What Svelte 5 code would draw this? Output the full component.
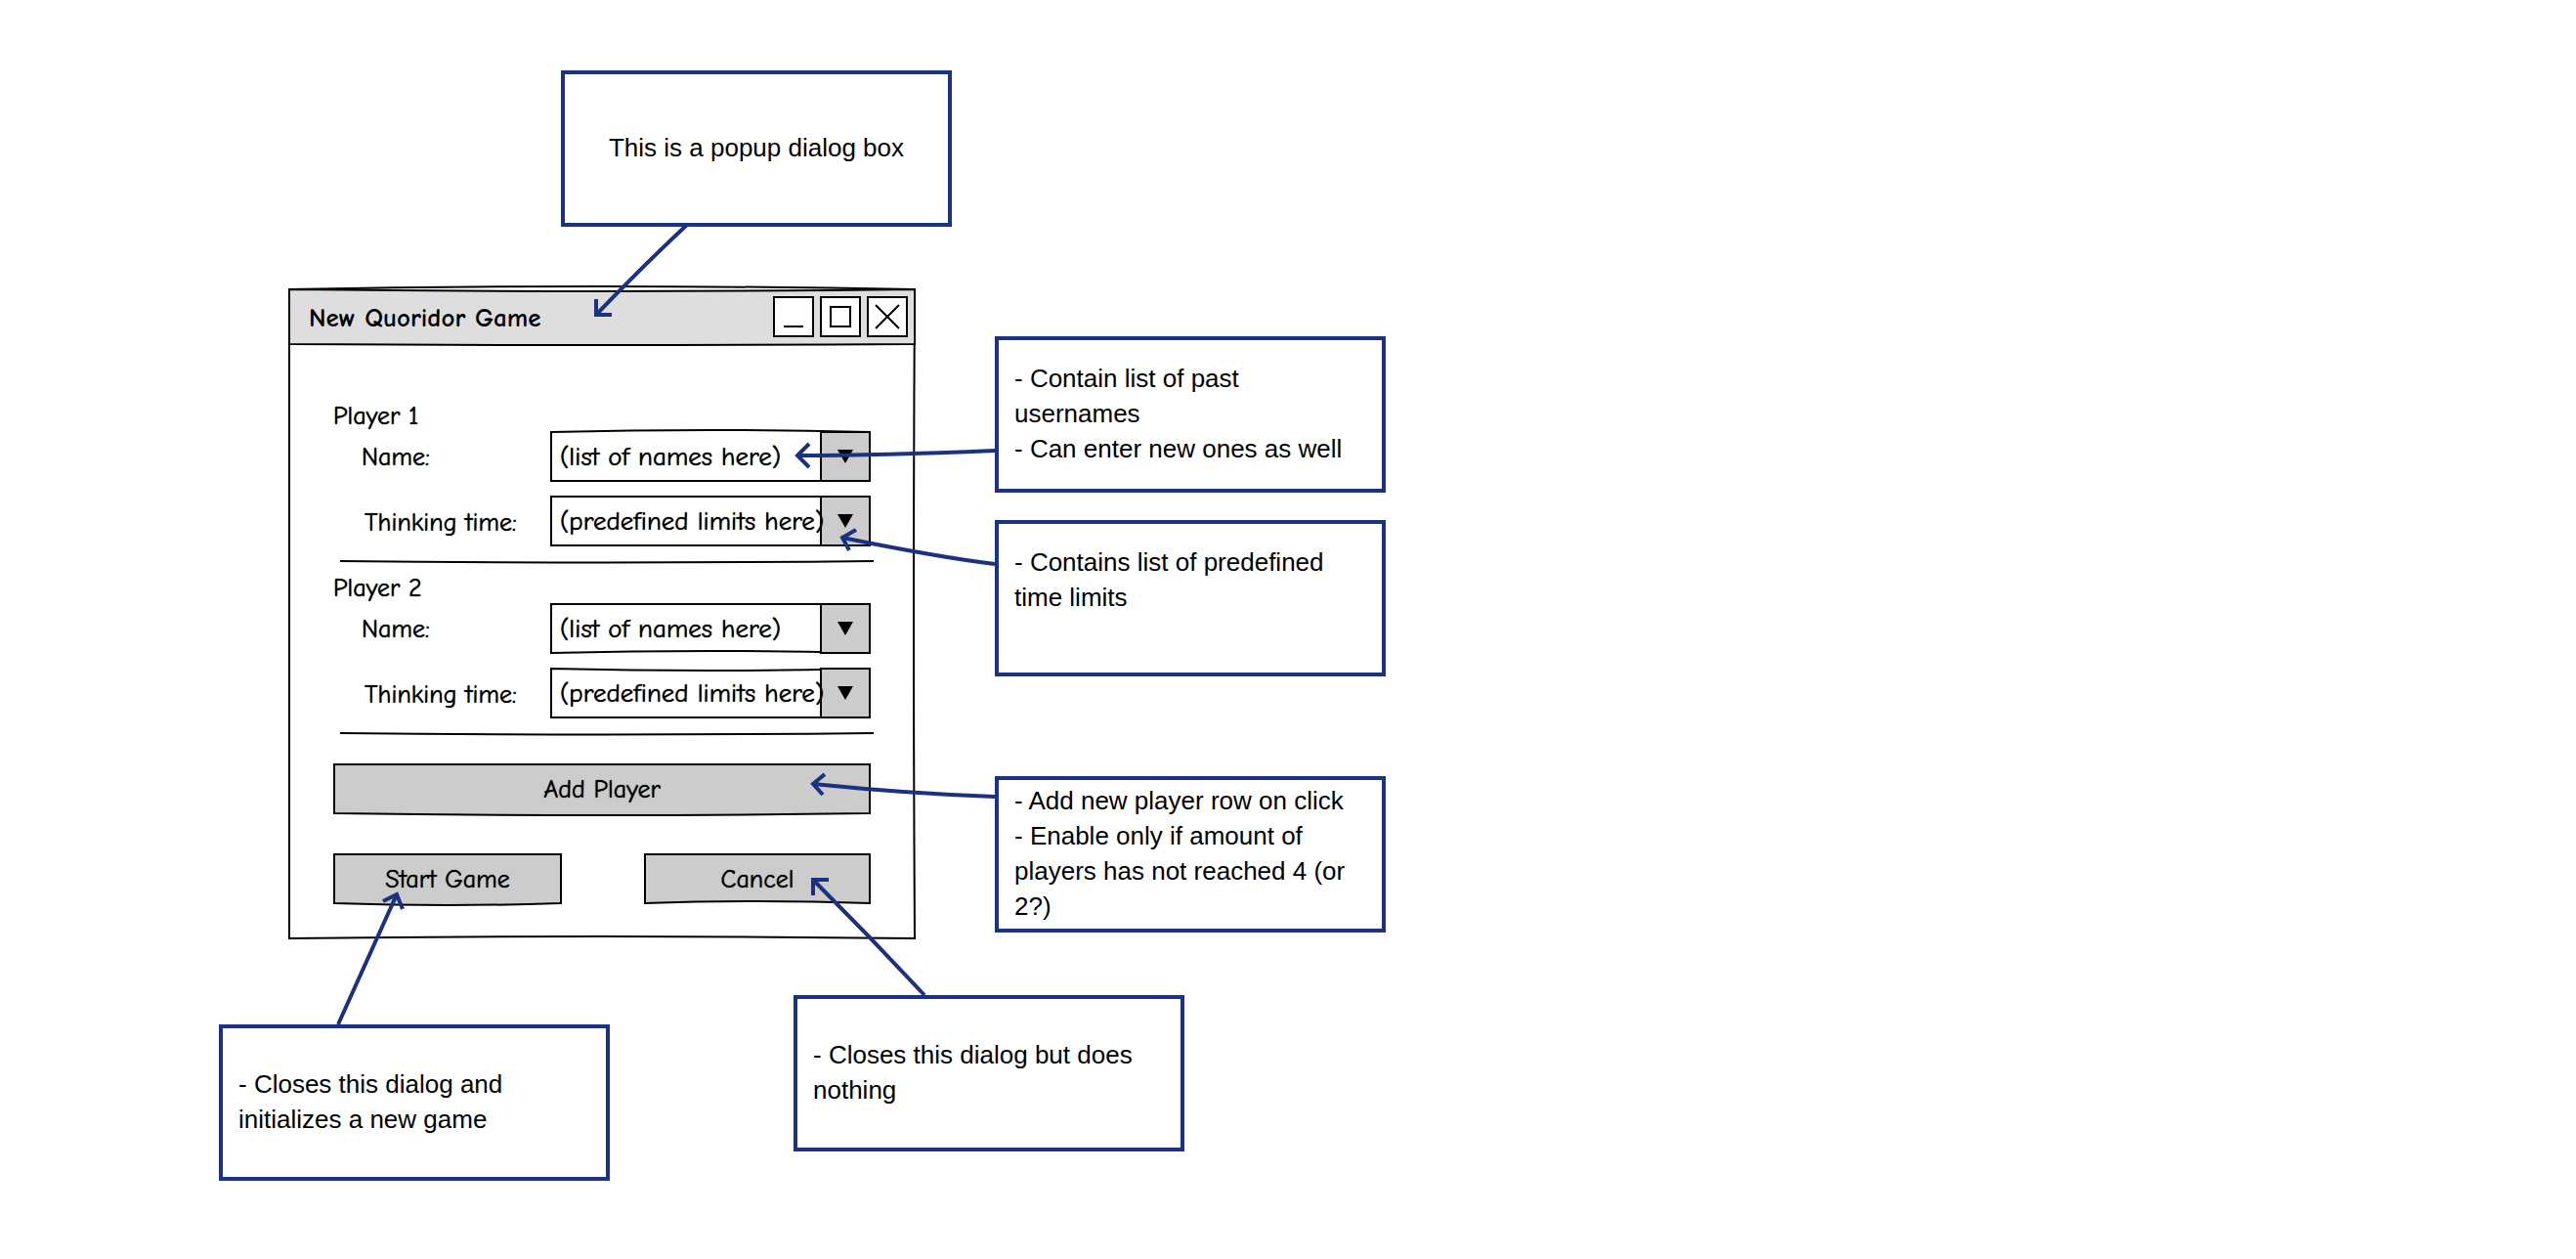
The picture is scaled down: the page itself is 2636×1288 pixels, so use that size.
<script>
  // top / bottom / right: how far each hand-drawn edge bows, in pixels
  let players = $state([
    { name: { top: -2, bottom: 0 }, time: { top: 0, bottom: 0 } },
    { name: { top: 0, bottom: -2 }, time: { top: 2, bottom: 0 } }
  ]);

  const notes = [
    { id: 'popup', lines: ['This is a popup dialog box'] },
    { id: 'names', lines: ['- Contain list of past usernames', '- Can enter new ones as well'] },
    { id: 'limits', lines: ['- Contains list of predefined time limits', ''] },
    { id: 'add', lines: ['- Add new player row on click', '- Enable only if amount of players has not reached 4 (or 2?)'] },
    { id: 'start', lines: ['- Closes this dialog and initializes a new game'] },
    { id: 'cancel', lines: ['- Closes this dialog but does nothing'] }
  ];

  const arrows = [
    'M703 230Q658 272 610 322M610 306V322H626',
    'M1018 461Q900 466 816 466M828 454L816 466L828 478',
    'M1018 577Q960 570 862 550M876 542L862 550L869 563',
    'M1018 815Q930 812 832 802M844 792L832 802L842 813',
    'M346 1048L406 915M392 922L406 915L412 930',
    'M946 1018Q890 958 832 900M832 916V900H848'
  ];

  function addPlayer() {
    if (players.length < 4) {
      players.push({ name: { top: 0, bottom: 0 }, time: { top: 0, bottom: 0 } });
    }
  }
</script>

{#snippet sketch(w, h, top = 0, bottom = 0, right = 0)}
  <svg class="sketch" viewBox="0 0 {w} {h}" preserveAspectRatio="none" aria-hidden="true">
    <path
      vector-effect="non-scaling-stroke"
      d="M1 1Q{w / 2} {1 + 2 * top} {w - 1} 1Q{w - 1 + 2 * right} {h / 2} {w - 1} {h - 1}Q{w / 2} {h - 1 + 2 * bottom} 1 {h - 1}Z"
    />
  </svg>
{/snippet}

{#snippet combo(id, label, value, edge)}
  <div class="row">
    <label class={label === 'Name:' ? 'name' : 'time'} for={id}>{label}</label>
    <div class="combo">
      {@render sketch(328, 52, edge.top, edge.bottom)}
      <span class="drop">
        <svg viewBox="0 0 16 14" aria-hidden="true"><path d="M0 0H16L8 14Z" /></svg>
      </span>
      <select {id}>
        <option>{value}</option>
      </select>
    </div>
  </div>
{/snippet}

<main class="canvas">
  <div class="window" role="dialog" aria-labelledby="title">
    {@render sketch(642, 666, -3, -2, -1)}
    <header>
      {@render sketch(642, 58, 2, 1)}
      <h1 id="title">New Quoridor Game</h1>
      <button class="tool" type="button" aria-label="Minimize">
        <svg viewBox="0 0 42 42"><path d="M11 31H31" /></svg>
      </button>
      <button class="tool" type="button" aria-label="Maximize">
        <svg viewBox="0 0 42 42"><path d="M11 11H31V31H11Z" /></svg>
      </button>
      <button class="tool" type="button" aria-label="Close">
        <svg viewBox="0 0 42 42"><path d="M9 9L33 33M33 9L9 33" /></svg>
      </button>
    </header>

    <form onsubmit={(e) => e.preventDefault()}>
      {#each players as player, i}
        <fieldset>
          <legend>Player {i + 1}</legend>
          <div class="rows">
            {@render combo(`name-${i}`, 'Name:', '(list of names here)', player.name)}
            {@render combo(`time-${i}`, 'Thinking time:', '(predefined limits here)', player.time)}
          </div>
          <svg class="rule" viewBox="0 0 546 4" preserveAspectRatio="none" aria-hidden="true">
            <path vector-effect="non-scaling-stroke" d="M0 1Q273 4 546 1" />
          </svg>
        </fieldset>
      {/each}

      <button class="action" type="button" onclick={addPlayer}>
        {@render sketch(550, 52, 0, 2)}
        <span>Add Player</span>
      </button>
      <div class="actions">
        <button class="action" type="submit">
          {@render sketch(234, 52, 0, 2)}
          <span>Start Game</span>
        </button>
        <button class="action" type="button">
          {@render sketch(232, 52, 0, -2)}
          <span>Cancel</span>
        </button>
      </div>
    </form>
  </div>

  {#each notes as note}
    <aside class="note {note.id}">
      {#each note.lines as line}
        <p>{line}</p>
      {/each}
    </aside>
  {/each}

  <svg class="arrows" aria-hidden="true">
    {#each arrows as d}
      <path {d} />
    {/each}
  </svg>
</main>

<style>
  :global(body) {
    background: #fff;
  }

  .canvas {
    position: relative;
    min-height: 100vh;
    color: #000;
    font: 26px/32px "Comic Sans MS", "Comic Neue", "Open Sans", sans-serif;
  }

  .sketch {
    position: absolute;
    inset: 0;
    width: 100%;
    height: 100%;
    overflow: visible;
    fill: #fff;
    stroke: #000;
    stroke-width: 2;
  }

  .window {
    position: absolute;
    left: 295px;
    top: 295px;
    width: 642px;
  }

  header {
    position: relative;
    display: flex;
    align-items: center;
    gap: 6px;
    height: 58px;
    box-sizing: border-box;
    padding: 0 8px 0 21px;
  }

  header > .sketch {
    fill: #dedede;
  }

  h1 {
    position: relative;
    flex: 1;
    margin: 0;
    padding-top: 4px;
    font-size: 27px;
    font-weight: 700;
    line-height: 32px;
  }

  button {
    margin: 0;
    padding: 0;
    border: 0;
    background: none;
    color: inherit;
    font: inherit;
    cursor: pointer;
  }

  .tool {
    position: relative;
    box-sizing: border-box;
    width: 42px;
    height: 42px;
    border: 2px solid #000;
    background: #fff;
  }

  .tool svg {
    display: block;
    width: 42px;
    height: 42px;
    margin: -2px;
    fill: none;
    stroke: #000;
    stroke-width: 2;
  }

  form {
    position: relative;
    padding: 56px 46px 36px;
    text-shadow: 0 0 1px #000;
  }

  fieldset {
    min-width: 0;
    margin: 0 0 10px;
    padding: 0;
    border: 0;
  }

  legend {
    padding: 2px 0 0;
    line-height: 30px;
  }

  .rows {
    display: grid;
    gap: 14px;
  }

  .row {
    display: grid;
    grid-template-columns: 222px 1fr;
    align-items: center;
  }

  .name {
    padding: 2px 0 0 29px;
  }

  .time {
    padding: 4px 0 0 32px;
  }

  .combo {
    position: relative;
    display: flex;
    justify-content: flex-end;
    height: 52px;
  }

  .drop {
    position: relative;
    display: grid;
    place-items: center;
    box-sizing: border-box;
    width: 52px;
    border: 2px solid #000;
    background: #ccc;
  }

  .drop svg {
    width: 16px;
    height: 14px;
  }

  select {
    position: absolute;
    inset: 0;
    width: 100%;
    padding: 2px 0 0 10px;
    border: 0;
    background: none;
    color: inherit;
    font: inherit;
    font-size: 27px;
    text-shadow: inherit;
    appearance: none;
  }

  .rule {
    display: block;
    width: 546px;
    height: 4px;
    margin: 14px 0 -2px 7px;
    overflow: visible;
    fill: none;
    stroke: #000;
    stroke-width: 2;
  }

  .action {
    position: relative;
    display: block;
    width: 100%;
    height: 52px;
    margin-top: 30px;
    padding-top: 2px;
    text-shadow: inherit;
  }

  .action .sketch {
    fill: #ccc;
  }

  .action span {
    position: relative;
  }

  .actions {
    display: grid;
    grid-template-columns: 234px 232px;
    justify-content: space-between;
    margin-top: 40px;
  }

  .actions .action {
    margin-top: 0;
  }

  .note {
    position: absolute;
    display: flex;
    flex-direction: column;
    justify-content: center;
    box-sizing: border-box;
    width: 400px;
    min-height: 160px;
    padding: 0 16px 2px;
    border: 4px solid #1b3281;
    background: #fff;
    font: 26px/36px "Liberation Sans", Arial, sans-serif;
  }

  .note p {
    min-height: 36px;
    margin: 0;
  }

  .popup {
    left: 574px;
    top: 72px;
    text-align: center;
  }

  .names {
    left: 1018px;
    top: 344px;
  }

  .limits {
    left: 1018px;
    top: 532px;
  }

  .add {
    left: 1018px;
    top: 794px;
  }

  .start {
    left: 224px;
    top: 1048px;
  }

  .cancel {
    left: 812px;
    top: 1018px;
  }

  .arrows {
    position: absolute;
    inset: 0;
    width: 100%;
    height: 100%;
    fill: none;
    stroke: #1b3281;
    stroke-width: 4;
    pointer-events: none;
  }
</style>
